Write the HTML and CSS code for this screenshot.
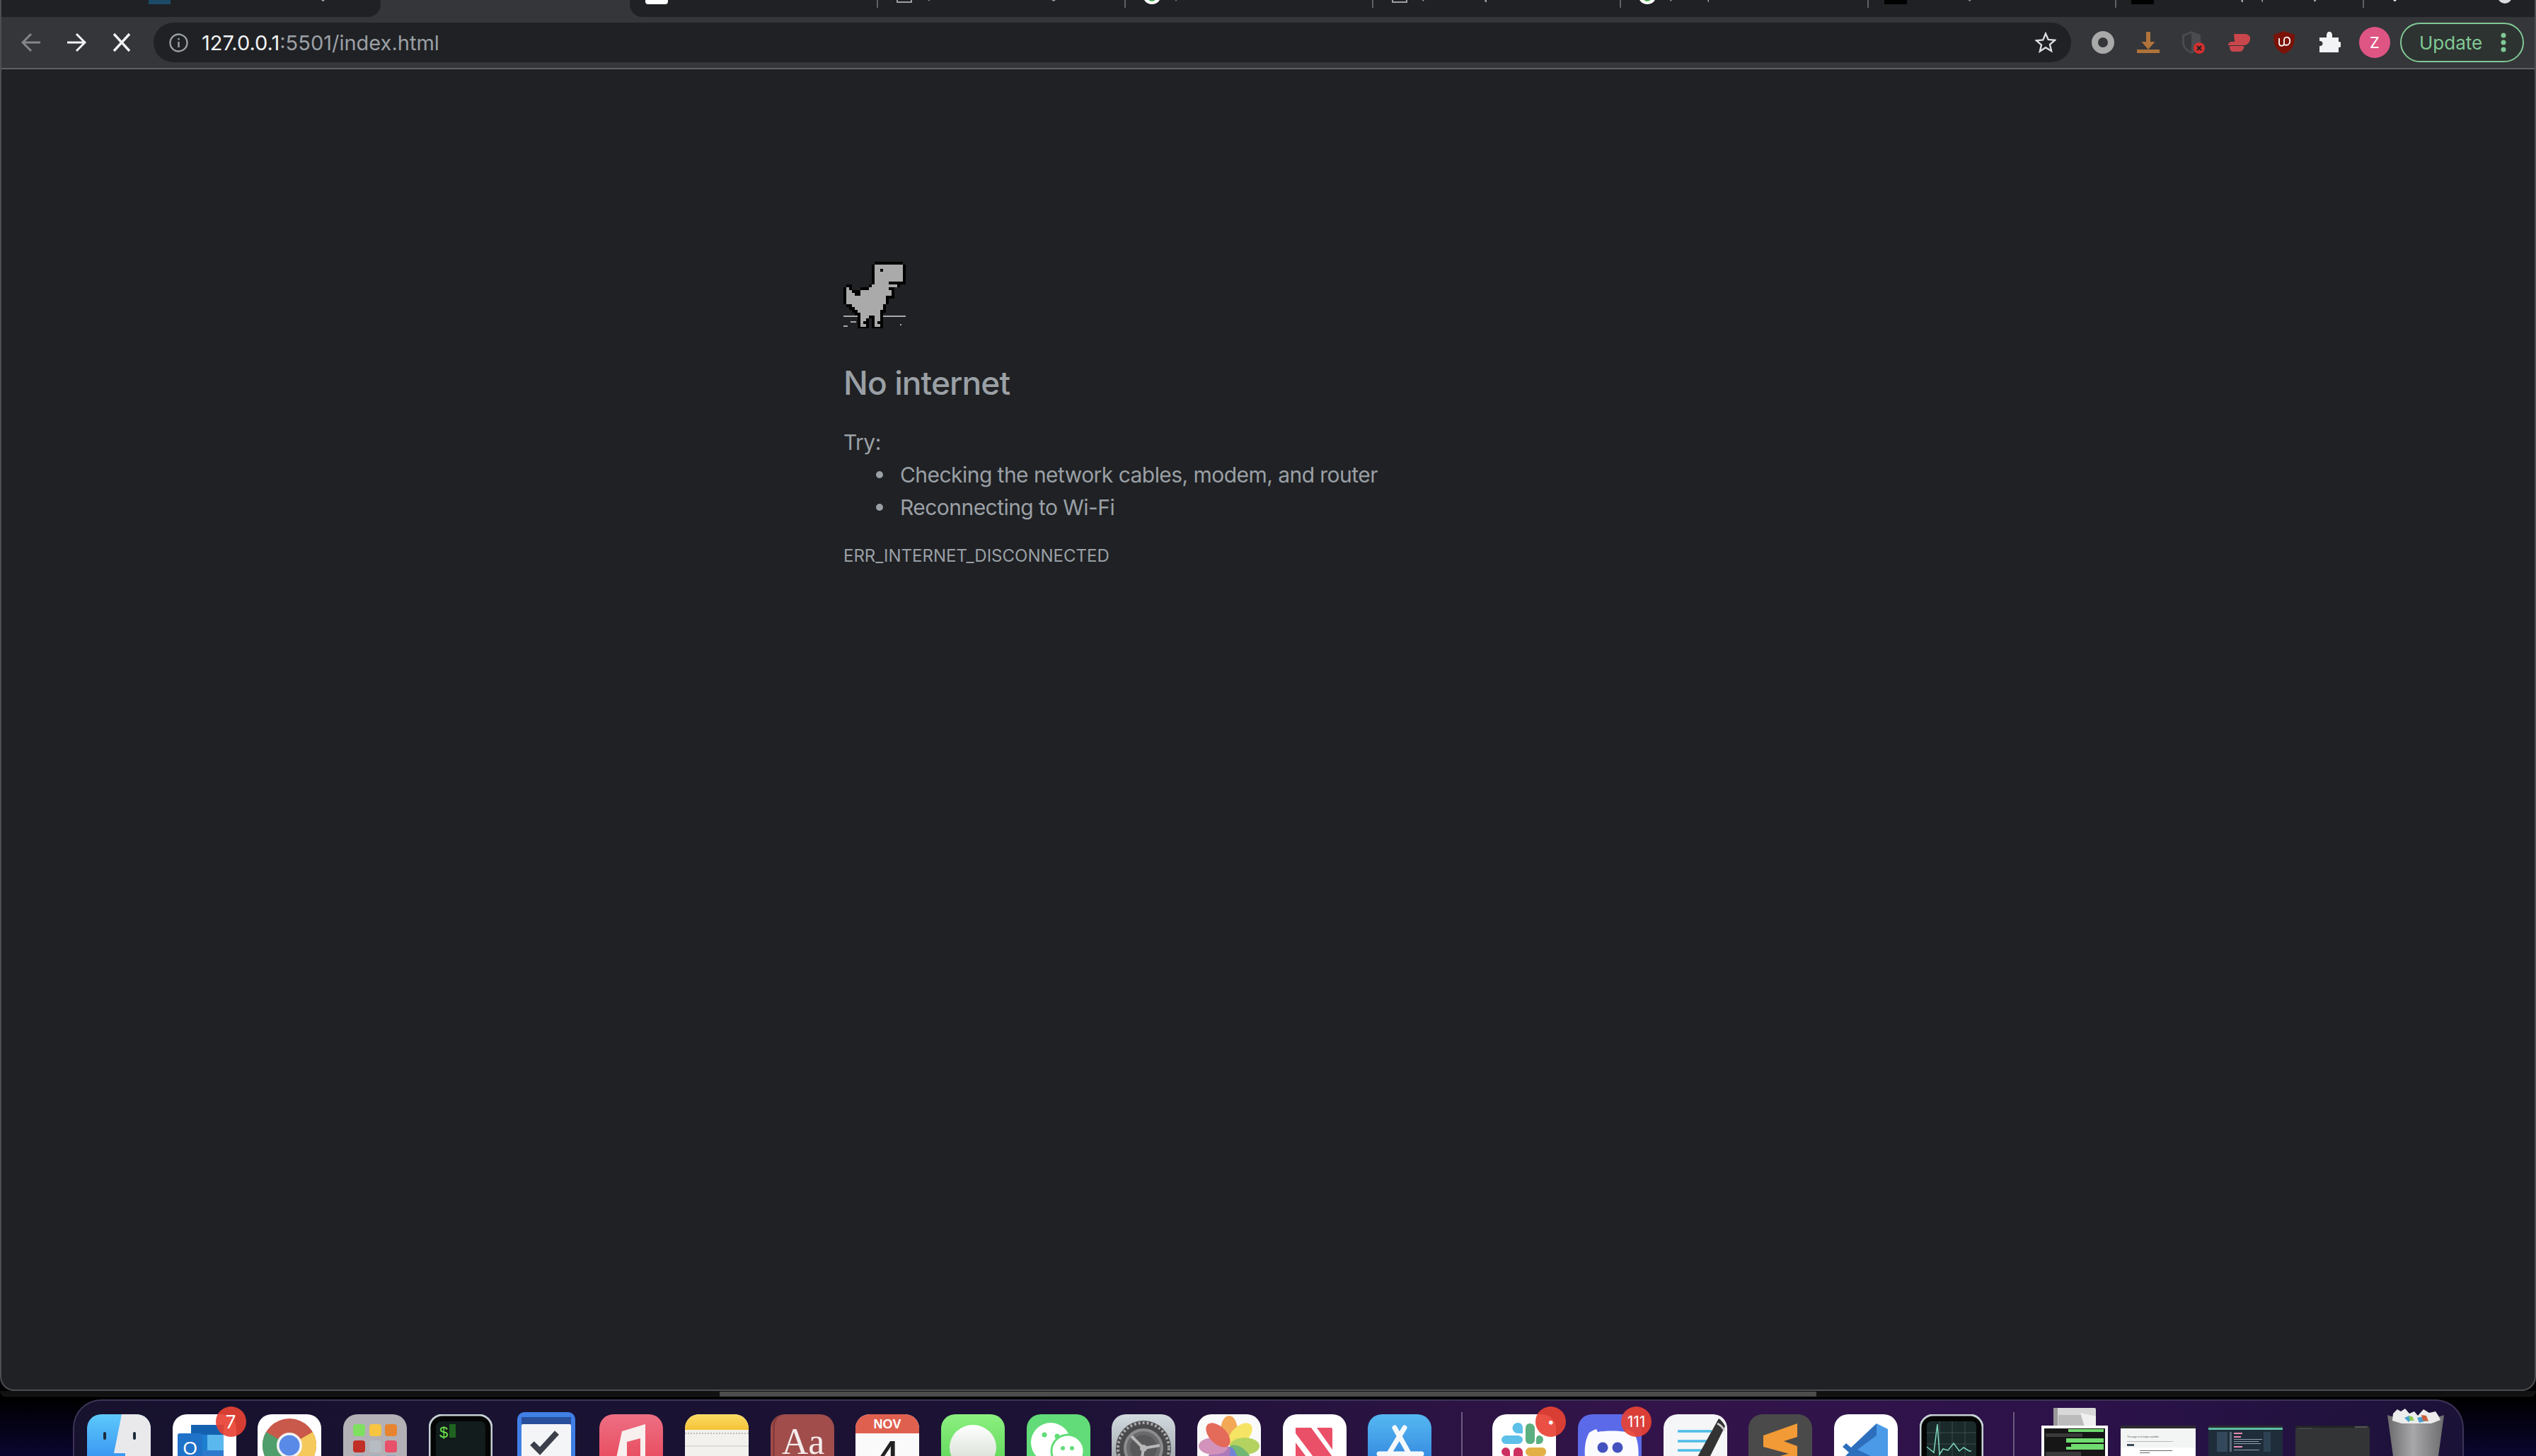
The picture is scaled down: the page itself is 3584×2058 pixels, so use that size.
FILE: index.html
```html
<!DOCTYPE html>
<html lang="en">
<head>
  <meta charset="UTF-8">
  <title>127.0.0.1</title>
  <link rel="stylesheet" href="styles.css">
</head>
<body>

  <div class="window">
    <div class="tabstrip">
      <div class="tabs tabs-left">
        <svg class="tab-marks" width="538" height="12"><rect x="210" width="31" height="6" fill="#1b4a68"/><path d="M454 0h5l-2 2h-1z" fill="#9aa0a6"/></svg>
      </div>
      <div class="tab-gap"></div>
      <div class="tabs tabs-right">
        <div class="tab"><svg class="tab-marks" width="349" height="12"><path d="M22 0h32v2q0 4-4 4h-24q-4 0-4-4z" fill="#fff"/></svg></div>
        <div class="tab"><svg class="tab-marks" width="349" height="12"><path d="M29 0v3h20V0" fill="none" stroke="#9aa0a6" stroke-width="2"/><path d="M73 0h2l-1 2zM247 0h6l-3 2z" fill="#9aa0a6"/></svg></div>
        <div class="tab"><svg class="tab-marks" width="349" height="12"><circle cx="39" cy="-7" r="13" fill="#fff"/><circle cx="39" cy="-5" r="7" fill="#4caf50"/><path d="M72 0h2l-1 2z" fill="#9aa0a6"/></svg></div>
        <div class="tab"><svg class="tab-marks" width="349" height="12"><path d="M29 0v3h20V0" fill="none" stroke="#9aa0a6" stroke-width="2"/><path d="M71 0h3l-2 2zM159 0h3v3h-2z" fill="#9aa0a6"/></svg></div>
        <div class="tab"><svg class="tab-marks" width="349" height="12"><circle cx="39" cy="-7" r="13" fill="#fff"/><circle cx="39" cy="-5" r="7" fill="#4caf50"/><path d="M71 0h3l-2 2zM124 0h2v3h-1z" fill="#9aa0a6"/></svg></div>
        <div class="tab"><svg class="tab-marks" width="349" height="12"><rect x="24" width="32" height="6" fill="#000"/><path d="M143 0h4l-3 2z" fill="#9aa0a6"/></svg></div>
        <div class="tab"><svg class="tab-marks" width="349" height="12"><path d="M281 0h3v2h-3z" fill="#9aa0a6"/><rect x="23" width="32" height="6" fill="#000"/><path d="M178 0h3v3h-2zM207 0h2v3h-1z" fill="#9aa0a6"/></svg></div>
        <div class="tab tab-last"><svg class="tab-marks" width="244" height="12"><path d="M43 0h5l-2 2h-1z" fill="#e8eaed"/><circle cx="201" cy="-5" r="10" fill="#dadce0"/></svg></div>
      </div>
    </div>

    <div class="toolbar">
      <svg class="nav-icon back" width="28" height="28" viewBox="0 0 28 28"><path d="M27 14H3M14 2 2 14l12 12" fill="none" stroke="currentColor" stroke-width="3"/></svg>
      <svg class="nav-icon forward" width="28" height="28" viewBox="0 0 28 28"><path d="M1 14h24M14 2l12 12-12 12" fill="none" stroke="currentColor" stroke-width="3"/></svg>
      <svg class="nav-icon stop" width="28" height="28" viewBox="0 0 28 28"><path d="M3 2l22 24M25 2 3 26" fill="none" stroke="currentColor" stroke-width="3.4"/></svg>

      <div class="omnibox">
        <svg class="info-icon" width="27" height="27" viewBox="0 0 27 27"><circle cx="13.5" cy="13.5" r="12" fill="none" stroke="#9aa0a6" stroke-width="2.4"/><path d="M13.5 12v8M13.5 7v2.6" stroke="#9aa0a6" stroke-width="2.4"/></svg>
        <span class="url"><span class="url-host">127.0.0.1</span>:5501/index.html</span>
        <svg class="star-icon" width="30" height="30" viewBox="0 0 30 30"><path d="M15 2.5l3.7 8.4 9.3.9-7 6.1 2.1 9.1-8.100-4.800L6.900 27.500 9 18.400l-7-6.100 9.300-.9z" fill="none" stroke="#dadce0" stroke-width="2.400"/></svg>
      </div>

      <div class="extensions">
        <svg width="32" height="32" viewBox="0 0 32 32"><circle cx="16" cy="16" r="11.500" fill="none" stroke="#a9a9a9" stroke-width="9"/></svg>
        <svg width="32" height="32" viewBox="0 0 32 32"><path d="M13 1h6v14h6.500L16 26 6.500 15H13z" fill="#b0733a"/><rect y="26" width="32" height="5" fill="#b0733a"/></svg>
        <svg width="32" height="32" viewBox="0 0 32 32"><path d="M13 0 26 5v12c0 6-5 11-13 15C5 28 0 23 0 17V5z" fill="#4a4b4e"/><path d="M13 3v26C6 25 3 21 3 16V7z" fill="#35363a"/><circle cx="24" cy="24" r="8" fill="#d32f2f"/><path d="M21 21l6 6M27 21l-6 6" stroke="#222" stroke-width="2.400"/></svg>
        <svg width="32" height="32" viewBox="0 0 32 32"><path d="M9 4h15c6 0 9 4 8 8-1 5-5 8-9 8H1c0-3 2-5 5-5h4z" fill="#c9464c"/><path d="M3 21h18c2 0 3 1 2 3-1 3-3 5-6 5H8c-4 0-5-4-5-8z" fill="#c9464c"/></svg>
        <svg width="32" height="32" viewBox="0 0 32 32"><path d="M16 0 31 5c0 12-2 22-15 27C3 27 1 17 1 5z" fill="#7a1208"/><path d="M9 10v7c0 5 7 5 7 0v-5c0-3 3-4 6-3 3 2 3 8 0 10-2 1-4 1-6 0" fill="none" stroke="#fff" stroke-width="1.800"/></svg>
        <svg width="32" height="32" viewBox="0 0 32 32"><path d="M12 6c0-7 8-7 8 0v3h9v6c6-1 6 9 0 8v7H2v-9c6 1 6-8 0-7V9h10z" fill="#f1f3f4"/></svg>
      </div>

      <div class="avatar">Z</div>
      <div class="update-btn">
        <span>Update</span>
        <svg width="8" height="28" viewBox="0 0 8 28"><circle cx="4" cy="4" r="3.500"/><circle cx="4" cy="14" r="3.500"/><circle cx="4" cy="24" r="3.500"/></svg>
      </div>
    </div>

    <div class="page">
      <div class="error-box">
        <svg class="dino" width="88" height="94" viewBox="36 30 264 282" shape-rendering="crispEdges">
          <path fill="#aaa" d="M36 258h60v6H36zM204 258h96v6h-96zM66 282h24v6H66zM36 300h18v6H36zM276 294h6v6h-6z"/>
          <path fill="#000" d="M168 30h120v12H168zM156 42h12v84h-12zM288 42h12v84h-12zM228 114h72v12h-72zM144 126h12v12h-12zM264 126h12v12h-12zM48 126h24v12H48zM36 138h12v72H36zM60 138h12v12H60zM108 138h36v12h-36zM228 138h24v12h-24zM72 150h36v12H72zM240 150h12v24h-12zM84 162h24v12H84zM216 174h36v12h-36zM216 186h12v24h-12zM48 210h24v12H48zM204 210h12v24h-12zM60 222h24v12H60zM72 234h24v12H72zM192 234h24v12h-24zM84 246h24v12H84zM192 246h12v12h-12zM96 258h12v48H96zM144 258h24v12h-24zM192 258h12v12h-12zM132 270h12v12h-12zM156 270h12v36h-12zM192 270h12v12h-12zM120 282h24v12h-24zM180 282h24v12h-24zM132 294h12v12h-12zM192 294h12v12h-12zM96 306h48v6H96zM156 306h48v6h-48z"/>
          <path fill="#aaa" d="M168 42h120v72H168zM168 114h60v12h-60zM156 126h108v12H156zM48 138h12v12H48zM144 138h84v12h-84zM48 150h24v12H48zM108 150h132v12H108zM48 162h36v12H48zM108 162h132v12H108zM48 174h168v36H48zM72 210h132v12H72zM84 222h120v12H84zM96 234h96v12H96zM108 246h84v12h-84zM108 258h36v12h-36zM168 258h24v12h-24zM108 270h24v12h-24zM168 270h24v12h-24zM108 282h12v12h-12zM168 282h12v12h-12zM108 294h24v12h-24zM168 294h24v12h-24z"/>
          <path fill="#000" d="M192 60h12v12h-12z"/>
        </svg>
        <h1 class="error-title">No internet</h1>
        <p class="try-label">Try:</p>
        <ul class="suggestions">
          <li>Checking the network cables, modem, and router</li>
          <li>Reconnecting to Wi-Fi</li>
        </ul>
        <div class="error-code">ERR_INTERNET_DISCONNECTED</div>
      </div>
    </div>
  </div>

  <div class="scroll-track"><div class="scroll-thumb"></div></div>

  <div class="dock">
    <div class="dock-group">
      <div class="dock-item">
        <svg width="90" height="90" viewBox="0 0 90 90"><defs><linearGradient id="finderBlue" x1="0" y1="0" x2="0" y2="1"><stop offset="0" stop-color="#5dc9fb"/><stop offset="1" stop-color="#2a7fee"/></linearGradient></defs><rect width="90" height="90" rx="20" fill="url(#finderBlue)"/><path d="M49 0h21a20 20 0 0 1 20 20v50a20 20 0 0 1-20 20H54v-35H38z" fill="#e9e9ec"/><rect x="23" y="25" width="4" height="11" rx="2" fill="#1d2b3a"/><rect x="65" y="25" width="4" height="11" rx="2" fill="#1d2b3a"/></svg>
      </div>
      <div class="dock-item">
        <svg width="90" height="90" viewBox="0 0 90 90"><rect width="90" height="90" rx="20" fill="#fff"/><rect x="26" y="15" width="46" height="14" fill="#1461b0"/><rect x="26" y="29" width="23" height="22" fill="#1c7fd0"/><rect x="49" y="29" width="23" height="22" fill="#5bb8ee"/><rect x="42" y="51" width="30" height="22" fill="#2d79cc"/><rect x="7" y="27" width="35" height="36" rx="3" fill="#2072c8"/><text class="icon-letter" x="24.500" y="57" font-size="26" fill="#fff" text-anchor="middle">O</text></svg>
        <div class="badge">7</div>
      </div>
      <div class="dock-item">
        <svg width="90" height="90" viewBox="0 0 90 90"><rect width="90" height="90" rx="20" fill="#fff"/><circle cx="45" cy="44" r="38" fill="#c9594b"/><path d="M45 44 78 25A38 38 0 0 1 45 82z" fill="#f5c95c"/><path d="M45 44 12 25A38 38 0 0 0 45 82z" fill="#4f9e6c"/><circle cx="45" cy="44" r="18" fill="#f4f4f4"/><circle cx="45" cy="44" r="14.500" fill="#5a8ae8"/></svg>
      </div>
      <div class="dock-item">
        <svg width="90" height="90" viewBox="0 0 90 90"><rect width="90" height="90" rx="20" fill="#b3b0b6"/><rect x="14" y="14" width="17" height="17" rx="4" fill="#7fe060"/><rect x="37" y="14" width="17" height="17" rx="4" fill="#f7c53f"/><rect x="59" y="14" width="17" height="17" rx="4" fill="#e8842f"/><rect x="14" y="37" width="17" height="17" rx="4" fill="#c12e25"/><rect x="37" y="37" width="17" height="17" rx="4" fill="#b6bcc2"/><rect x="59" y="37" width="17" height="17" rx="4" fill="#e9506a"/><rect x="14" y="58" width="17" height="17" rx="4" fill="#8fa8c8"/><rect x="37" y="58" width="17" height="17" rx="4" fill="#8fb4c8"/><rect x="59" y="58" width="17" height="17" rx="4" fill="#8fa0c8"/></svg>
      </div>
      <div class="dock-item">
        <svg width="90" height="90" viewBox="0 0 90 90"><rect x="1" y="1" width="88" height="88" rx="18" fill="#050505" stroke="#c5d0d4" stroke-width="3"/><rect x="10" y="10" width="70" height="72" rx="8" fill="#121c1c"/><text class="icon-letter" x="15" y="33" font-size="22" fill="#6ee04a">$</text><rect x="29" y="14" width="9" height="19" fill="#1f6420"/></svg>
      </div>
      <div class="dock-item dock-item-things">
        <svg width="90" height="90" viewBox="0 0 90 90"><rect x="5" width="82" height="90" rx="10" fill="#3f7fe6"/><rect x="11" y="7" width="70" height="12" fill="#274f9a"/><rect x="11" y="17" width="70" height="70" rx="2" fill="#f4f5f7"/><path d="M26 44l11 11 24-26" fill="none" stroke="#3a3f4a" stroke-width="8"/></svg>
      </div>
      <div class="dock-item">
        <svg width="90" height="90" viewBox="0 0 90 90"><defs><linearGradient id="musicBg" x1="0" y1="0" x2="0" y2="1"><stop offset="0" stop-color="#ee6f84"/><stop offset="1" stop-color="#e63f50"/></linearGradient></defs><rect width="90" height="90" rx="20" fill="url(#musicBg)"/><path d="M32 24 65 14v50c0 8-6 12-12 12s-8-3-8-7c0-5 5-8 13-9V34l-19 5v32c0 8-6 11-11 11s-7-3-7-6z" fill="#f7f0ee"/></svg>
      </div>
      <div class="dock-item">
        <svg width="90" height="90" viewBox="0 0 90 90"><defs><linearGradient id="notesTop" x1="0" y1="0" x2="0" y2="1"><stop offset="0" stop-color="#fbdc66"/><stop offset="1" stop-color="#f5c335"/></linearGradient></defs><rect width="90" height="90" rx="20" fill="#f2f1ee"/><path d="M0 22V20A20 20 0 0 1 20 0h50a20 20 0 0 1 20 20v2z" fill="url(#notesTop)"/><path d="M0 27h90" stroke="#bbb" stroke-width="2" stroke-dasharray="2 2"/><path d="M0 45h90" stroke="#dcdbd7" stroke-width="2"/></svg>
      </div>
      <div class="dock-item">
        <svg width="90" height="90" viewBox="0 0 90 90"><rect width="90" height="90" rx="20" fill="#a04d4c"/><path d="M3 90V16Q3 3 16 1 6 5 6 18v72z" fill="#8a3c3c"/><text class="icon-serif" x="46" y="56" font-size="52" fill="#f4ecea" text-anchor="middle">Aa</text></svg>
      </div>
      <div class="dock-item">
        <svg width="90" height="90" viewBox="0 0 90 90"><rect width="90" height="90" rx="20" fill="#fafafa"/><path d="M0 27V20A20 20 0 0 1 20 0h50a20 20 0 0 1 20 20v7z" fill="#e0604f"/><text class="icon-letter" x="45" y="20" font-size="18" font-weight="700" fill="#fff" text-anchor="middle">NOV</text><text class="icon-letter" x="45" y="87" font-size="70" fill="#222" text-anchor="middle">4</text></svg>
      </div>
      <div class="dock-item">
        <svg width="90" height="90" viewBox="0 0 90 90"><defs><linearGradient id="msgBg" x1="0" y1="0" x2="0" y2="1"><stop offset="0" stop-color="#8cf080"/><stop offset="1" stop-color="#55d050"/></linearGradient><linearGradient id="msgBubble" x1="0" y1="0" x2="0" y2="1"><stop offset="0" stop-color="#fff"/><stop offset="1" stop-color="#cfd8cc"/></linearGradient></defs><rect width="90" height="90" rx="20" fill="url(#msgBg)"/><ellipse cx="45" cy="47" rx="33" ry="32" fill="url(#msgBubble)"/></svg>
      </div>
      <div class="dock-item">
        <svg width="90" height="90" viewBox="0 0 90 90"><rect width="90" height="90" rx="20" fill="#62dc78"/><circle cx="34" cy="40" r="28" fill="#fff"/><circle cx="25" cy="29" r="3.500" fill="#62dc78"/><circle cx="43" cy="31" r="3.500" fill="#62dc78"/><circle cx="58" cy="52" r="23" fill="#fff" stroke="#62dc78" stroke-width="3"/><circle cx="51" cy="48" r="3" fill="#62dc78"/><circle cx="64" cy="48" r="3" fill="#62dc78"/></svg>
      </div>
      <div class="dock-item">
        <svg width="90" height="90" viewBox="0 0 90 90"><defs><linearGradient id="gearBg" x1="0" y1="0" x2="0" y2="1"><stop offset="0" stop-color="#d2dbe0"/><stop offset="1" stop-color="#8f9498"/></linearGradient></defs><rect width="90" height="90" rx="20" fill="url(#gearBg)"/><circle cx="45" cy="48" r="39" fill="#4a4a4c"/><circle cx="45" cy="48" r="36" fill="none" stroke="#a8a8a8" stroke-width="4" stroke-dasharray="3 3"/><circle cx="45" cy="48" r="26" fill="#6a6a6c" stroke="#8c8c8e" stroke-width="4"/><circle cx="45" cy="48" r="19" fill="#59595b"/><path d="M45 48 28 31M45 48 68 44M45 48 41 74" stroke="#b8b8b8" stroke-width="4"/><circle cx="45" cy="48" r="5" fill="#b8b8b8"/></svg>
      </div>
      <div class="dock-item">
        <svg width="90" height="90" viewBox="0 0 90 90"><rect width="90" height="90" rx="20" fill="#fafafa"/><g class="petals"><ellipse cx="45" cy="23" rx="12" ry="21" fill="#f0993a"/><ellipse cx="45" cy="23" rx="12" ry="21" fill="#f5e04a" transform="rotate(45 45 45)"/><ellipse cx="45" cy="23" rx="12" ry="21" fill="#a8cc45" transform="rotate(90 45 45)"/><ellipse cx="45" cy="23" rx="12" ry="21" fill="#5aab5c" transform="rotate(135 45 45)"/><ellipse cx="45" cy="23" rx="12" ry="21" fill="#5a6fd0" transform="rotate(180 45 45)"/><ellipse cx="45" cy="23" rx="12" ry="21" fill="#a064b0" transform="rotate(225 45 45)"/><ellipse cx="45" cy="23" rx="12" ry="21" fill="#cc80b0" transform="rotate(270 45 45)"/><ellipse cx="45" cy="23" rx="12" ry="21" fill="#e0503c" transform="rotate(315 45 45)"/></g></svg>
      </div>
      <div class="dock-item">
        <svg width="90" height="90" viewBox="0 0 90 90"><rect width="90" height="90" rx="20" fill="#fff"/><path d="M18 19h22l30 41v12H52L18 27zM48 19h20q2 0 2 2v29zM18 40l24 32H20q-2 0-2-2z" fill="#ea5068"/></svg>
      </div>
      <div class="dock-item">
        <svg width="90" height="90" viewBox="0 0 90 90"><defs><linearGradient id="storeBg" x1="0" y1="0" x2="0" y2="1"><stop offset="0" stop-color="#55b8f2"/><stop offset="1" stop-color="#2a78d8"/></linearGradient></defs><rect width="90" height="90" rx="20" fill="url(#storeBg)"/><path d="M38 19 62 62M52 19 26 62M16 56h60" fill="none" stroke="#f6f9fc" stroke-width="7" stroke-linecap="round"/></svg>
      </div>
    </div>

    <div class="dock-sep"></div>

    <div class="dock-group">
      <div class="dock-item">
        <svg width="90" height="90" viewBox="0 0 90 90"><rect width="90" height="90" rx="20" fill="#fff"/><path d="M36 12a6.500 7 0 0 1 7 7v8h-7a7 7 0 0 1 0-15zM19 30h17c4 0 7 3 7 6s-3 6-7 6H19c-3 0-6-3-6-6s3-6 6-6z" fill="#5cc0e8"/><path d="M53 13c4 0 7 3 7 7v16c0 4-3 6-7 6s-6-3-6-6V20c0-4 2-7 6-7zM66 30c4 0 6 3 6 6s-3 6-6 6h-4V36c0-3 1-6 4-6z" fill="#5ab080"/><path d="M36 47c4 0 7 3 7 6v16c0 4-3 6-7 6s-6-3-6-6V53c0-3 2-6 6-6zM19 47c3 0 6 3 6 6v6h-6c-3 0-6-3-6-6s3-6 6-6z" fill="#cc3060"/><path d="M53 47h18c3 0 5 3 5 6s-2 6-5 6H53c-3 0-6-3-6-6s3-6 6-6zM47 63h7v7a6 6 0 0 1-7-7z" fill="#e2b044"/></svg>
        <div class="badge badge-dot">•</div>
      </div>
      <div class="dock-item">
        <svg width="90" height="90" viewBox="0 0 90 90"><rect width="90" height="90" rx="20" fill="#5b6ae8"/><path d="M26 21c-4 1-7 3-10 5C9 38 8 54 12 78c4 4 12 8 17 9l4-7c12 3 18 3 30 0l4 7c5-1 13-5 17-9 3-24 2-40-5-52-3-2-6-4-10-5l-2 4c-9-2-29-2-39 0z" fill="#fbfbff"/><ellipse cx="35" cy="47" rx="7.500" ry="7.500" fill="#4452c0"/><ellipse cx="56" cy="47" rx="7.500" ry="7.500" fill="#4452c0"/></svg>
        <div class="badge badge-small">111</div>
      </div>
      <div class="dock-item">
        <svg width="90" height="90" viewBox="0 0 90 90"><rect width="90" height="90" rx="20" fill="#f4f6f7"/><path d="M20 24h48M20 38h48M20 51h42" stroke="#4dbde8" stroke-width="3.500"/><path d="M78 6c3 2 7 6 9 11L58 75 48 60z" fill="#333"/><path d="M76 13c4 2 8 6 10 10" stroke="#ccc" stroke-width="3" fill="none"/></svg>
      </div>
      <div class="dock-item">
        <svg width="90" height="90" viewBox="0 0 90 90"><rect width="90" height="90" rx="20" fill="#4a4a4a"/><path d="M21 30 69 13v19L50 38l19 7v14L21 46z" fill="#f29a35"/><path d="M21 66 69 52v30L21 70z" fill="#f29a35"/></svg>
      </div>
      <div class="dock-item">
        <svg width="90" height="90" viewBox="0 0 90 90"><rect width="90" height="90" rx="20" fill="#fff"/><path d="M60 13 24 47l-7-6-5 5 9 8-9 9 5 5 8-8 35 32z" fill="#2d6fbc"/><path d="M60 13 76 21v52L60 85V63L33 50l27-20z" fill="#4a9ae8"/></svg>
      </div>
      <div class="dock-item">
        <svg width="90" height="90" viewBox="0 0 90 90"><rect x="1" y="1" width="88" height="88" rx="18" fill="#050505" stroke="#c5d0d4" stroke-width="3"/><rect x="10" y="10" width="70" height="72" rx="6" fill="#1a2a2a"/><path d="M10 26h70M10 42h70M28 10v72M46 10v72M64 10v72" stroke="#3a4c4c" stroke-width="1"/><path d="M10 46l10 8 5-40 3 43 5-8 7 2 8-10 8 11 6-5 8 5 3 0" fill="none" stroke="#7fd8bc" stroke-width="1.500"/></svg>
      </div>
    </div>

    <div class="dock-sep dock-sep-last"></div>

    <div class="dock-thumbs">
      <svg class="thumb thumb-stack" width="94" height="68" viewBox="0 0 94 68"><rect x="17" y="0" width="60" height="30" rx="2" fill="#d8d8d8"/><rect x="17" y="0" width="6" height="30" fill="#999"/><rect x="24" y="10" width="44" height="20" fill="#bbb"/><path d="M55 7 77 12v18H62z" fill="#f0f0f0"/><rect y="25" width="94" height="43" fill="#fff"/><rect x="4" y="29" width="86" height="39" fill="#161616"/><rect x="38" y="30" width="50" height="4" fill="#6fdc6f"/><rect x="6" y="36" width="52" height="5" fill="#3a3a3a"/><rect x="35" y="43" width="53" height="6" fill="#6fdc6f"/><rect x="42" y="51" width="46" height="4" fill="#6fdc6f"/><rect x="35" y="55" width="53" height="4" fill="#6fdc6f"/><rect x="6" y="62" width="50" height="6" fill="#3a3a3a"/></svg>
      <svg class="thumb" width="106" height="43" viewBox="0 0 106 43"><rect width="106" height="43" fill="#fff"/><rect width="106" height="4" fill="#2a2b2e"/><rect y="4" width="106" height="27" fill="#f3f4f4"/><text class="icon-letter" x="9" y="17" font-size="3.200" fill="#555">This page is no longer available</text><rect x="9" y="22" width="65" height="1" fill="#bbb"/><rect x="9" y="26" width="10" height="3" fill="#3c4a5c"/><rect x="27" y="35" width="46" height="1" fill="#666"/><rect x="27" y="38" width="14" height="1" fill="#666"/></svg>
      <svg class="thumb" width="105" height="43" viewBox="0 0 105 43"><rect width="105" height="43" fill="#1f2d3a"/><rect width="105" height="3" fill="#2a2b2e"/><rect y="3" width="105" height="3" fill="#5bbfa8"/><rect x="12" y="9" width="15" height="28" fill="#33485a"/><rect x="30" y="9" width="3" height="28" fill="#5a6a7a"/><rect x="36" y="10" width="12" height="2" fill="#e88ab0"/><rect x="36" y="15" width="10" height="2" fill="#e88ab0"/><rect x="36" y="19" width="40" height="1" fill="#8fa0ae"/><rect x="36" y="22" width="35" height="1" fill="#8fa0ae"/><rect x="36" y="25" width="38" height="1" fill="#8fa0ae"/><rect x="36" y="29" width="12" height="2" fill="#e88ab0"/><rect x="36" y="34" width="36" height="1" fill="#8fa0ae"/><rect x="78" y="9" width="10" height="28" fill="#2c4252"/></svg>
      <svg class="thumb" width="105" height="43" viewBox="0 0 105 43"><rect width="105" height="43" fill="#333436"/><rect width="105" height="3" fill="#222326"/><rect x="4" y="3" width="20" height="2" fill="#444"/><rect x="84" y="1" width="18" height="2" fill="#555"/></svg>
      <svg class="trash" width="80" height="68" viewBox="0 0 80 68"><defs><linearGradient id="trashBody" x1="0" y1="0" x2="1" y2="0"><stop offset="0" stop-color="#6a6a6c"/><stop offset=".45" stop-color="#a8a8aa"/><stop offset="1" stop-color="#6c6c6e"/></linearGradient></defs><path d="M0 10c10 6 70 6 80 0L72 68H8z" fill="url(#trashBody)"/><path d="M8 8 14 2l5 3 6-4 6 7 7-3 5 6 8-9 8 5 9-2 4 6 3 6-13 5H20L7 18z" fill="#ececec"/><path d="M24 14l7-3 5 3-6 6zM42 14l9-2 5 6-11 3z" fill="#4aa0d0"/><path d="M30 12h5l3 6h-6z" fill="#8ccc50"/><path d="M48 10l7 1 3 8-8-1z" fill="#c8603a"/></svg>
    </div>
  </div>

</body>
</html>
```

FILE: styles.css
```css
* {
  box-sizing: border-box;
}

html, body {
  margin: 0;
  padding: 0;
}

body {
  width: 3584px;
  height: 2058px;
  overflow: hidden;
  display: flex;
  flex-direction: column;
  font-family: Inter, 'Noto Sans', sans-serif;
  background: linear-gradient(180deg, #000 1978px, #0a0530 2058px);
}

svg {
  display: block;
  flex: none;
}

.window {
  flex: none;
  height: 1966px;
  display: flex;
  flex-direction: column;
  background: #202124;
  border: 2px solid #4d4e51;
  border-top: none;
  border-radius: 0 0 20px 20px;
  overflow: hidden;
}

/* tab strip */
.tabstrip {
  flex: none;
  height: 24px;
  margin: 0 -2px;
  display: flex;
  background: #35363a;
}

.tabs {
  height: 24px;
  background: #202124;
}

.tabs-left {
  flex: none;
  width: 538px;
  border-bottom-right-radius: 18px;
}

.tab-gap {
  flex: none;
  width: 352px;
}

.tabs-right {
  flex: 1;
  display: flex;
  border-bottom-left-radius: 18px;
}

.tab {
  flex: none;
  width: 350px;
  height: 24px;
}

.tab + .tab {
  background: linear-gradient(#606165, #606165) no-repeat left top / 2px 11px;
}

.tab:first-child {
  width: 349px;
}

.tab-last {
  width: 245px;
}

/* toolbar */
.toolbar {
  flex: none;
  height: 74px;
  margin: 0 -2px;
  padding: 8px 17px 8px 30px;
  display: flex;
  align-items: center;
  background: #35363a;
  border-bottom: 2px solid #5f6063;
}

.nav-icon {
  margin-right: 36px;
}

.back {
  color: #85868a;
}

.forward, .stop {
  color: #f1f3f4;
}

.stop {
  margin-right: 31px;
}

.omnibox {
  flex: 1;
  height: 56px;
  padding: 0 21px 0 22px;
  display: flex;
  align-items: center;
  background: #202124;
  border-radius: 28px;
}

.url {
  flex: 1;
  margin-left: 19px;
  font-size: 29px;
  color: #9aa0a6;
}

.url-host {
  color: #f1f3f4;
}

.extensions {
  margin-left: 29px;
  display: flex;
  gap: 32px;
}

.avatar {
  width: 44px;
  height: 44px;
  margin-left: 26px;
  display: flex;
  align-items: center;
  justify-content: center;
  border-radius: 50%;
  background: #de5583;
  color: #fff;
  font-size: 22px;
}

.update-btn {
  width: 175px;
  height: 56px;
  margin-left: 14px;
  padding: 0 23px 0 25px;
  display: flex;
  align-items: center;
  justify-content: space-between;
  border: 2px solid #81c995;
  border-radius: 28px;
  background: #2d3331;
  color: #81c995;
  font-size: 26px;
  fill: #81c995;
}

/* error page */
.page {
  flex: 1;
  padding: 272px 0 0 1190px;
}

.error-box {
  color: #9aa0a6;
}

.error-title {
  margin: 50px 0 0;
  font-size: 46px;
  font-weight: 500;
  line-height: 54px;
  letter-spacing: -0.9px;
}

.try-label {
  margin: 34px 0 0;
  font-size: 30px;
  line-height: 46px;
  letter-spacing: -0.55px;
}

.suggestions {
  margin: 0;
  padding-left: 80px;
  list-style: none;
  font-size: 30px;
  line-height: 46px;
  letter-spacing: -0.55px;
}

.suggestions li {
  display: flex;
  align-items: center;
}

.suggestions li::before {
  content: '';
  flex: none;
  width: 10px;
  height: 10px;
  margin: 0 24px 0 -34px;
  border-radius: 50%;
  background: #9aa0a6;
}

.error-code {
  margin-top: 31px;
  font-size: 24px;
  line-height: 30px;
}

/* bottom of the window */
.scroll-track {
  flex: none;
  height: 8px;
  margin-bottom: 4px;
  padding: 1px 0 0 1017px;
  background: #111;
  border-bottom: 1px solid #1a1a1a;
  border-radius: 0 0 20px 20px;
}

.scroll-thumb {
  width: 1550px;
  height: 7px;
  background: #4c4c4c;
}

/* dock */
.dock {
  flex: none;
  height: 80px;
  margin-left: 103px;
  width: 3379px;
  padding: 19px 0 0 18px;
  display: flex;
  align-items: flex-start;
  overflow: hidden;
  border: 2px solid #3e3356;
  border-bottom: none;
  border-radius: 40px 40px 0 0;
  background: linear-gradient(90deg, #17122e 0%, #1c1235 40%, #33144a 66%, #2b1249 85%, #1b1238 100%);
}

.dock-group {
  flex: none;
  display: flex;
  gap: 30.7px;
}

.dock-item {
  position: relative;
  flex: none;
  width: 90px;
  height: 90px;
}

.dock-item-things {
  margin-top: -3px;
}

.dock-sep {
  flex: none;
  width: 2px;
  height: 70px;
  margin: -3px 42px 0;
  background: #6b5a80;
}

.dock-sep-last {
  margin-right: 38px;
}

.dock-thumbs {
  flex: none;
  display: flex;
  gap: 18px;
  align-items: flex-start;
}

.thumb {
  margin-top: 16px;
}

.thumb-stack {
  margin-top: -9px;
}

.trash {
  margin: -9px 0 0 7px;
}

.petals {
  opacity: .85;
}

.icon-letter {
  font-family: 'Liberation Sans', sans-serif;
}

.icon-serif {
  font-family: 'Liberation Serif', serif;
}

.badge {
  position: absolute;
  top: -11px;
  left: 61px;
  width: 43px;
  height: 43px;
  display: flex;
  align-items: center;
  justify-content: center;
  border-radius: 50%;
  background: rgba(232, 66, 52, .92);
  color: #fff;
  font-size: 26px;
}

.badge-small {
  font-size: 21px;
}

.badge-dot {
  font-size: 18px;
}
```
